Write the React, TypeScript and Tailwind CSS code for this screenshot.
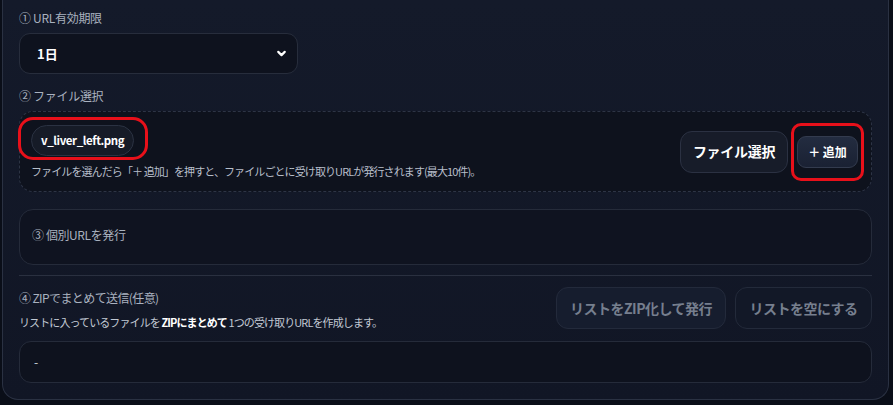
import { ChevronDown } from 'lucide-react';

const font = "font-['Noto_Sans_CJK_JP','Noto_Sans',sans-serif]";

export default function App() {
  return (
    <div className={`min-h-screen bg-[#0a0e18] pl-[2px] pr-[4px] ${font}`}>
      <div className="rounded-b-[16px] border-x border-b border-[#2a3142] bg-gradient-to-b from-[#141a2a] to-[#111625] px-[16px] pt-[10px] pb-[16px]">
        {/* 1 */}
        <div className="text-[12px] leading-[16px] tracking-[-0.3px] text-[#a9b1bf]">① URL有効期限</div>
        <div className="mt-[7px] flex h-[41px] w-[279px] items-center justify-between rounded-[11px] border border-[#272d3c] bg-[#0e121e] pl-[17px] pr-[9px]">
          <span className="text-[13px] font-bold text-white">1日</span>
          <ChevronDown className="h-[13px] w-[13px] text-white" strokeWidth={4} />
        </div>

        {/* 2 */}
        <div className="mt-[14px] text-[12px] leading-[16px] tracking-[-0.3px] text-[#a9b1bf]">② ファイル選択</div>
        <div className="mt-[7px] flex h-[81px] items-center justify-between rounded-[14px] border border-dashed border-[#2d3445] bg-[#0e121d] pl-[11px] pr-[13px]">
          <div className="flex flex-col pt-[1px]">
            <div className="relative self-start">
              <div className="flex h-[31px] items-center rounded-full border border-[#2b3242] bg-[#161b27] px-[9px] text-[11.5px] font-bold tracking-[-0.4px] text-white">
                v_liver_left.png
              </div>
              <div className="pointer-events-none absolute -left-[13px] -right-[14px] -top-[8px] -bottom-[4px] rounded-[15px] border-[3px] border-[#e8101a]" />
            </div>
            <div className="mt-[7px] text-[11px] leading-[16px] tracking-[-0.9px] text-[#b8bfcb]">
              ファイルを選んだら「＋ 追加」を押すと、ファイルごとに受け取りURLが発行されます(最大10件)。
            </div>
          </div>
          <div className="flex items-center gap-[9px]">
            <button className="h-[42px] w-[108px] rounded-[12px] border border-[#2b3142] bg-[#171c29] text-[14px] font-bold tracking-[-0.3px] text-white">
              ファイル選択
            </button>
            <div className="relative">
              <button className="h-[32px] w-[61px] rounded-[9px] border border-[#333b4e] bg-gradient-to-b from-[#232c40] to-[#1a2133] text-[12px] font-bold text-white">
                ＋ 追加
              </button>
              <div className="pointer-events-none absolute -left-[6px] -right-[6px] -top-[13px] -bottom-[13px] rounded-[10px] border-[3px] border-[#e8101a]" />
            </div>
          </div>
        </div>

        {/* 3 */}
        <div className="mt-[17px] flex h-[56px] items-center rounded-[14px] border border-[#252b3a] bg-[#0f1320] pl-[12px] pb-[4px]">
          <span className="text-[12px] tracking-[-0.4px] text-[#a9b1bf]">③ 個別URLを発行</span>
        </div>

        <div className="mt-[10px] h-px bg-[#2a3040]" />

        {/* 4 */}
        <div className="mt-[10px] flex items-center justify-between">
          <div className="flex flex-col gap-[8px] pt-[4px]">
            <div className="text-[12px] leading-[16px] tracking-[-0.6px] text-[#a9b1bf]">④ ZIPでまとめて送信(任意)</div>
            <div className="text-[11px] leading-[16px] tracking-[-0.9px] text-[#c2c9d4]">
              リストに入っているファイルを <b className="font-bold text-white">ZIPにまとめて</b> 1つの受け取りURLを作成します。
            </div>
          </div>
          <div className="flex gap-[9px]">
            <button className="h-[42px] w-[170px] rounded-[12px] border border-[#232a3b] bg-[#161d2e] text-[14px] font-bold tracking-[-0.5px] text-[#767f8e]">
              リストをZIP化して発行
            </button>
            <button className="h-[42px] w-[137px] rounded-[12px] border border-[#232a3a] bg-[#121827] text-[14px] font-bold tracking-[-0.5px] text-[#767f8e]">
              リストを空にする
            </button>
          </div>
        </div>
        <div className="mt-[11px] flex h-[42px] items-center rounded-[12px] border border-[#252b3a] bg-[#0e121e] pl-[14px]">
          <span className="text-[12px] text-[#d0d6de]">-</span>
        </div>
      </div>
    </div>
  );
}
